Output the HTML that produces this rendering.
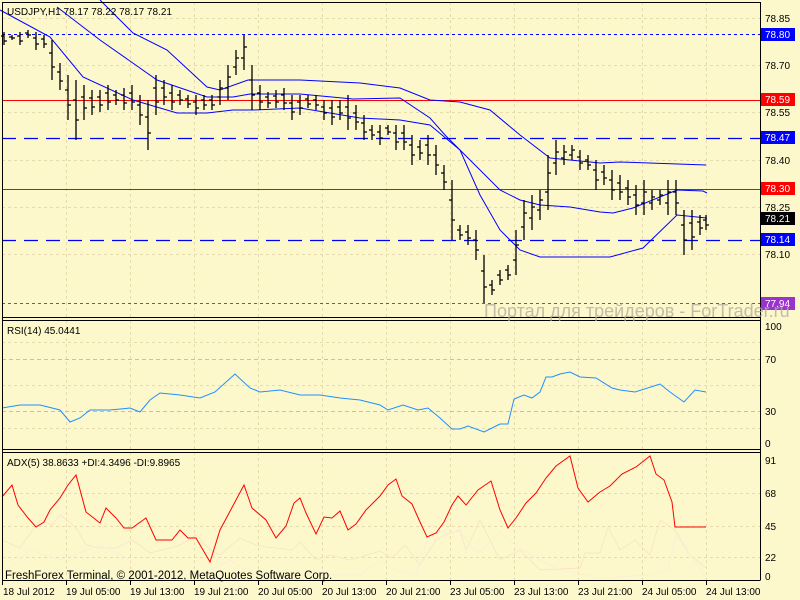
<!DOCTYPE html>
<html><head><meta charset="utf-8"><style>
html,body{margin:0;padding:0;background:#fdf8cc;}
svg{display:block}
text{font-family:"Liberation Sans",sans-serif;font-size:10px;}
</style></head><body>
<svg width="800" height="600" viewBox="0 0 800 600" xmlns="http://www.w3.org/2000/svg">
<rect width="800" height="600" fill="#fdf8cc"/>
<g stroke="#e6dcae" stroke-dasharray="3,3" stroke-width="1">
<path d="M66.5 2V580M130.5 2V580M194.5 2V580M258.5 2V580M322.5 2V580M386.5 2V580M450.5 2V580M514.5 2V580M578.5 2V580M642.5 2V580M706.5 2V580"/>
<path d="M2 18.5H760M2 65.5H760M2 112.5H760M2 160.5H760M2 207.5H760M2 254.5H760"/>
<path d="M2 342.5H760M2 385.5H760M2 428.5H760M2 493.5H760M2 526.5H760M2 557.5H760"/>
</g>
<g stroke="#c8c0a8" stroke-dasharray="4,3"><path d="M2 359.5H760M2 411.5H760"/></g>
<path d="M2 34.5H760" stroke="#0000ff" stroke-dasharray="3,3"/>
<path d="M2 100.5H760" stroke="#ff0000"/>
<path d="M2 138.5H760" stroke="#0000ff" stroke-dasharray="14,8" stroke-width="1.3"/>
<path d="M2 189.5H760" stroke="#ff0000"/>
<path d="M2 240.5H760" stroke="#0000ff" stroke-dasharray="14,8" stroke-width="1.3"/>
<path d="M2 303.5H760" stroke="#9933cc" stroke-dasharray="3,3"/>
<g fill="none" stroke="#0000ff" stroke-width="1">
<polyline points="100,0 133,33 167,50 207,87 220,90 248,80 300,80 360,83 400,88 430,100 460,102 490,110 520,135 550,158 600,163 620,162 706,165"/>
<polyline points="57,7 100,40 157,80 207,97 233,97 250,94 300,94 353,99 400,98 430,118 445,135 470,160 500,190 520,200 540,205 570,207 600,212 613,213 633,208 677,190 703,191 707,193"/>
<polyline points="0,10 50,37 83,77 133,100 177,113 207,113 233,110 253,110 300,108 360,118 400,120 430,125 460,150 480,195 500,230 520,250 540,257 610,257 643,248 677,215 707,218"/>
</g>
<path fill="none" stroke="#000" stroke-width="1.3" d="
M4 32V45M1 36H4M4 41H7 M12 35V40M9 37H12M12 38H15 M20 32V45M17 36H20M20 41H23 M28 30V38M25 33H28M28 35H31 M36 32V50M33 38H36M36 44H39 M44 35V48M41 39H44M44 44H47
M52 40V80M49 53H52M52 67H55 M60 63V90M57 72H60M60 81H63 M68 75V120M65 90H68M68 105H71 M76 80V140M73 100H76M76 120H79 M84 85V120M81 97H84M84 108H87 M92 90V115M89 98H92M92 107H95
M100 90V112M97 97H100M100 105H103 M108 85V110M105 93H108M108 102H111 M116 90V105M113 95H116M116 100H119 M124 88V110M121 95H124M124 103H127 M132 85V110M129 93H132M132 102H135 M140 95V125M137 105H140M140 115H143
M148 100V150M145 117H148M148 133H151 M156 75V115M153 88H156M156 102H159 M164 80V105M161 88H164M164 97H167 M172 85V110M169 93H172M172 102H175 M180 90V105M177 95H180M180 100H183 M188 95V108M185 99H188M188 104H191
M196 95V115M193 102H196M196 108H199 M204 95V110M201 100H204M204 105H207 M212 95V110M209 100H212M212 105H215 M220 80V105M217 97H220M220 88H223 M228 65V100M225 88H228M228 77H231 M236 50V75M233 67H236M236 58H239
M244 35V70M241 58H244M244 47H247 M252 65V110M249 80H252M252 95H255 M260 85V110M257 93H260M260 102H263 M268 92V108M265 97H268M268 103H271 M276 90V108M273 96H276M276 102H279 M284 88V110M281 95H284M284 103H287
M292 95V120M289 103H292M292 112H295 M300 95V115M297 102H300M300 108H303 M308 95V108M305 99H308M308 104H311 M316 95V110M313 100H316M316 105H319 M324 100V120M321 107H324M324 113H327 M332 100V125M329 108H332M332 117H335
M340 100V120M337 107H340M340 113H343 M348 95V130M345 107H348M348 118H351 M356 105V130M353 113H356M356 122H359 M364 115V140M361 123H364M364 132H367 M372 125V140M369 130H372M372 135H375 M380 125V145M377 132H380M380 138H383
M388 125V135M385 128H388M388 132H391 M396 125V150M393 133H396M396 142H399 M404 125V150M401 133H404M404 142H407 M412 135V165M409 145H412M412 155H415 M420 140V160M417 147H420M420 153H423 M428 135V165M425 145H428M428 155H431
M436 145V175M433 155H436M436 165H439 M444 165V190M441 173H444M444 182H447 M452 180V240M449 200H452M452 220H455 M460 225V240M457 230H460M460 235H463 M468 225V245M465 232H468M468 238H471 M476 230V260M473 240H476M476 250H479
M484 255V303M481 271H484M484 287H487 M492 280V295M489 285H492M492 290H495 M500 270V285M497 275H500M500 280H503 M508 265V280M505 270H508M508 275H511 M516 230V275M513 260H516M516 245H519 M524 200V240M521 227H524M524 213H527
M532 195V230M529 218H532M532 207H535 M540 190V220M537 210H540M540 200H543 M548 155V210M545 192H548M548 173H551 M556 140V175M553 163H556M556 152H559 M564 145V165M561 158H564M564 152H567 M572 145V160M569 155H572M572 150H575
M580 150V170M577 157H580M580 163H583 M588 155V170M585 160H588M588 165H591 M596 160V190M593 170H596M596 180H599 M604 165V185M601 172H604M604 178H607 M612 170V200M609 180H612M612 190H615 M620 175V200M617 183H620M620 192H623
M628 180V205M625 188H628M628 197H631 M636 185V215M633 195H636M636 205H639 M644 180V215M641 203H644M644 192H647 M652 190V210M649 203H652M652 197H655 M660 190V205M657 200H660M660 195H663 M668 180V215M665 203H668M668 192H671
M676 180V215M673 192H676M676 203H679 M684 210V255M681 225H684M684 240H687 M692 210V250M689 223H692M692 237H695 M700 215V235M697 222H700M700 228H703 M706 215V230M703 220H706M706 225H709"/>
<polyline fill="none" stroke="#1e90ff" stroke-width="1" points="2,408 20,405 40,405 60,410 70,422 80,418 90,410 110,410 130,408 140,412 150,400 160,393 180,395 200,398 215,392 235,374 250,388 260,392 280,390 300,395 320,395 340,398 360,400 380,405 388,410 403,405 418,410 428,408 440,418 452,429 460,429 468,426 484,432 492,428 500,424 508,424 514,399 524,395 532,398 540,392 546,377 552,377 560,374 570,372 580,377 596,378 612,388 620,390 635,392 660,384 670,392 684,402 695,390 706,392"/>
<polyline fill="none" stroke="#f8e6c8" points="2,540 20,548 40,520 52,525 60,515 68,521 76,528 86,545 100,548 116,548 132,540 150,553 170,548 180,545 196,535 210,550 220,555 240,538 256,545 266,547 292,550 300,542 316,560 330,555 350,560 380,551 392,558 405,545 420,565 436,540 445,535 460,530 466,550 480,520 500,560 520,550 540,570 580,568 585,553 600,553 608,527 620,550 635,540 650,555 660,520 675,530 690,555 706,568"/>
<polyline fill="none" stroke="#faf0d6" points="2,575 30,550 60,560 100,545 122,555 150,575 200,575 230,560 260,580 300,575 330,575 360,575 380,560 395,570 415,575 430,532 460,532 478,553 500,532 515,545 540,560 560,570 600,578 650,575 668,569 676,536 690,555 706,577"/>
<polyline fill="none" stroke="#ff0000" stroke-width="1" points="2,497 12,485 18,505 28,518 36,527 44,522 50,510 60,498 68,485 76,475 86,512 100,523 106,508 116,518 124,528 132,528 146,518 156,540 172,540 180,530 188,538 196,538 210,562 220,530 244,485 252,508 266,520 276,538 286,526 294,503 300,498 306,513 316,534 324,517 332,518 340,511 348,530 356,524 366,510 380,496 388,485 396,479 402,496 412,504 420,522 427,537 436,533 444,522 452,505 458,496 466,505 478,490 491,481 500,510 508,528 516,518 526,503 536,493 546,478 556,466 570,456 578,488 588,502 600,492 610,486 622,474 636,467 650,456 656,474 664,480 672,502 675,527 706,527"/>
<g fill="none" stroke="#000" stroke-width="1">
<path d="M2.5 2.5V580.5M2 2.5H760.5V580.5M2 580.5H760"/>
<path d="M2 317.5H760M2 320.5H760M2 449.5H760M2 452.5H760"/>
</g>
<g stroke="#000"><path d="M2.5 581V585M66.5 581V585M130.5 581V585M194.5 581V585M258.5 581V585M322.5 581V585M386.5 581V585M450.5 581V585M514.5 581V585M578.5 581V585M642.5 581V585M706.5 581V585"/></g>
<g fill="#000">
<text x="765" y="22">78.85</text><text x="765" y="69">78.70</text><text x="765" y="116">78.55</text><text x="765" y="164">78.40</text><text x="765" y="211">78.25</text><text x="765" y="258">78.10</text>
<text x="765" y="330">100</text><text x="765" y="363">70</text><text x="765" y="415">30</text><text x="765" y="447">0</text>
<text x="765" y="464">91</text><text x="765" y="497">68</text><text x="765" y="530">45</text><text x="765" y="561">22</text><text x="765" y="580">0</text>
</g>
<rect x="761" y="28" width="34" height="13" fill="#0000ff"/><text x="765" y="38" fill="#fff">78.80</text>
<rect x="761" y="93" width="34" height="13" fill="#ff0000"/><text x="765" y="103" fill="#fff">78.59</text>
<rect x="761" y="131" width="34" height="13" fill="#0000ff"/><text x="765" y="141" fill="#fff">78.47</text>
<rect x="761" y="182" width="34" height="13" fill="#ff0000"/><text x="765" y="192" fill="#fff">78.30</text>
<rect x="761" y="212" width="34" height="13" fill="#000"/><text x="765" y="222" fill="#fff">78.21</text>
<rect x="761" y="233" width="34" height="13" fill="#0000ff"/><text x="765" y="243" fill="#fff">78.14</text>
<rect x="761" y="297" width="34" height="13" fill="#9933cc"/><text x="765" y="307" fill="#fff">77.94</text>
<text x="484" y="317" fill="#b4ae9c" style="font-size:18px" fill-opacity="0.8">Портал для трейдеров - ForTrader.ru</text>
<text x="7" y="15" fill="#000">USDJPY,H1  78.17 78.22 78.17 78.21</text>
<text x="7" y="334" fill="#000">RSI(14) 45.0441</text>
<text x="7" y="466" fill="#000">ADX(5) 38.8633 +DI:4.3496 -DI:9.8965</text>
<text x="5" y="579" fill="#000" style="font-size:11.5px">FreshForex Terminal, © 2001-2012, MetaQuotes Software Corp.</text>
<g fill="#000">
<text x="3" y="595">18 Jul 2012</text><text x="66" y="595">19 Jul 05:00</text><text x="130" y="595">19 Jul 13:00</text><text x="194" y="595">19 Jul 21:00</text><text x="258" y="595">20 Jul 05:00</text><text x="322" y="595">20 Jul 13:00</text><text x="386" y="595">20 Jul 21:00</text><text x="450" y="595">23 Jul 05:00</text><text x="514" y="595">23 Jul 13:00</text><text x="578" y="595">23 Jul 21:00</text><text x="642" y="595">24 Jul 05:00</text><text x="706" y="595">24 Jul 13:00</text>
</g>
</svg>
</body></html>
